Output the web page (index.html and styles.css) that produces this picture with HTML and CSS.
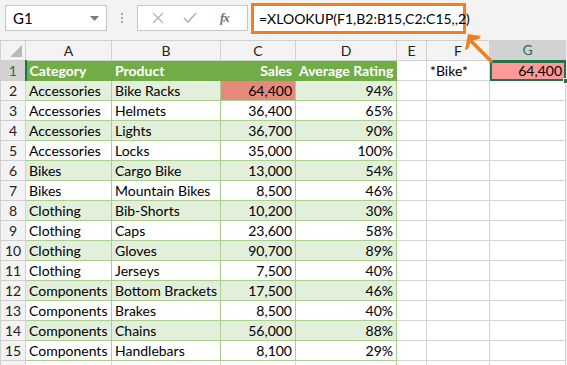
FILE: index.html
```html
<!DOCTYPE html>
<html lang="en">
<head>
  <meta charset="UTF-8" />
  <title>XLOOKUP wildcard</title>
  <link rel="stylesheet" href="styles.css">
</head>
<body>
  <div class="sheet">
    <!-- Name box + formula bar -->
    <div class="toolbar">
      <div class="namebox">
        <span>G1</span>
        <svg class="drop" width="9" height="5" viewBox="0 0 9 5"><path d="M0 0h9L4.5 5z" fill="#7a7a7a"/></svg>
      </div>
      <div class="grip"><i></i><i></i><i></i></div>
      <div class="fxbox">
        <svg width="12" height="12" viewBox="0 0 12 12"><path d="M1 1l10 10M11 1L1 11" stroke="#b4b4b4" stroke-width="1.3"/></svg>
        <svg width="14" height="12" viewBox="0 0 14 12"><path d="M1 6l4 4 8-9" stroke="#b4b4b4" stroke-width="1.6" fill="none"/></svg>
        <span class="fx">fx</span>
      </div>
      <div class="formula">=XLOOKUP(F1,B2:B15,C2:C15,,2)</div>
    </div>

    <table class="grid">
      <colgroup>
        <col class="c-row"><col class="c-a"><col class="c-b"><col class="c-c"><col class="c-d"><col class="c-e"><col class="c-f"><col class="c-g">
      </colgroup>
      <thead>
        <tr>
          <th class="corner"><span class="tri"></span></th>
          <th>A</th><th>B</th><th>C</th><th>D</th><th>E</th><th>F</th><th class="active">G</th>
        </tr>
      </thead>
      <tbody>
        <tr>
          <th class="active-row">1</th>
          <td class="hd">Category</td><td class="hd">Product</td><td class="hd num">Sales</td><td class="hd">Average Rating</td>
          <td></td><td>*Bike*</td><td class="num result">64,400<span class="handle"></span></td>
        </tr>
        <tr class="band"><th>2</th><td>Accessories</td><td>Bike Racks</td><td class="num hit">64,400</td><td class="num">94%</td><td></td><td></td><td></td></tr>
        <tr><th>3</th><td>Accessories</td><td>Helmets</td><td class="num">36,400</td><td class="num">65%</td><td></td><td></td><td></td></tr>
        <tr class="band"><th>4</th><td>Accessories</td><td>Lights</td><td class="num">36,700</td><td class="num">90%</td><td></td><td></td><td></td></tr>
        <tr><th>5</th><td>Accessories</td><td>Locks</td><td class="num">35,000</td><td class="num">100%</td><td></td><td></td><td></td></tr>
        <tr class="band"><th>6</th><td>Bikes</td><td>Cargo Bike</td><td class="num">13,000</td><td class="num">54%</td><td></td><td></td><td></td></tr>
        <tr><th>7</th><td>Bikes</td><td>Mountain Bikes</td><td class="num">8,500</td><td class="num">46%</td><td></td><td></td><td></td></tr>
        <tr class="band"><th>8</th><td>Clothing</td><td>Bib-Shorts</td><td class="num">10,200</td><td class="num">30%</td><td></td><td></td><td></td></tr>
        <tr><th>9</th><td>Clothing</td><td>Caps</td><td class="num">23,600</td><td class="num">58%</td><td></td><td></td><td></td></tr>
        <tr class="band"><th>10</th><td>Clothing</td><td>Gloves</td><td class="num">90,700</td><td class="num">89%</td><td></td><td></td><td></td></tr>
        <tr><th>11</th><td>Clothing</td><td>Jerseys</td><td class="num">7,500</td><td class="num">40%</td><td></td><td></td><td></td></tr>
        <tr class="band"><th>12</th><td>Components</td><td>Bottom Brackets</td><td class="num">17,500</td><td class="num">46%</td><td></td><td></td><td></td></tr>
        <tr><th>13</th><td>Components</td><td>Brakes</td><td class="num">8,500</td><td class="num">40%</td><td></td><td></td><td></td></tr>
        <tr class="band"><th>14</th><td>Components</td><td>Chains</td><td class="num">56,000</td><td class="num">88%</td><td></td><td></td><td></td></tr>
        <tr><th>15</th><td>Components</td><td>Handlebars</td><td class="num">8,100</td><td class="num">29%</td><td></td><td></td><td></td></tr>
        <tr class="cut"><th></th><td></td><td></td><td></td><td></td><td></td><td></td><td></td></tr>
      </tbody>
    </table>

    <!-- callout from G1 to the formula -->
    <svg class="callout" width="40" height="40" viewBox="0 0 40 40">
      <path d="M33 33L14 14" stroke="#f07f1f" stroke-width="3.5" stroke-linecap="round"/>
      <path d="M10 6l13 2-2 3-8 2-3 8-3 1z" fill="#f07f1f"/>
    </svg>
  </div>
</body>
</html>
```

FILE: styles.css
```css
:root {
  --chrome: #f3f3f3;
  --gridline: #d4d4d4;
  --green: #70ad47;
  --band: #e2efda;
  --band-line: #a9d08e;
  --excel: #217346;
  --orange: #f07f1f;
}

* { box-sizing: border-box; }

body {
  margin: 0;
  background: #fff;
  font-family: Lato, "Open Sans", sans-serif;
  color: #000;
}

.sheet {
  position: relative;
  width: 567px;
  height: 365px;
  overflow: hidden;
  background: var(--chrome);
}

/* ---- formula bar ---- */
.toolbar {
  display: flex;
  align-items: center;
  height: 40px;
  padding: 0 0 4px 5px;
}

.namebox {
  width: 102px;
  height: 26px;
  background: #fff;
  border: 1px solid #c6c6c6;
  display: flex;
  align-items: center;
  justify-content: space-between;
  padding: 0 7px 0 7px;
  font-size: 15px;
}

.namebox .drop { margin-top: 1px; }

.grip {
  width: 30px;
  display: flex;
  flex-direction: column;
  align-items: center;
  gap: 2px;
}

.grip i {
  width: 2px;
  height: 2px;
  background: #a6a6a6;
}

.fxbox {
  width: 111px;
  height: 26px;
  background: #fff;
  border: 1px solid #c6c6c6;
  display: flex;
  align-items: center;
  gap: 0;
  padding: 0 10px 0 14px;
}

.fxbox svg:first-child { margin-right: 19px; }
.fxbox svg:nth-child(2) { margin-right: 23px; }

.fx {
  font-family: "Liberation Serif", serif;
  font-style: italic;
  font-weight: bold;
  font-size: 13px;
  color: #6f6f6f;
  letter-spacing: -1px;
}

.formula {
  margin-left: 3px;
  width: 215px;
  height: 31px;
  margin-top: 1px;
  background: #fff;
  border: 3px solid var(--orange);
  font-size: 14px;
  padding: 4px 0 0 5px;
  white-space: nowrap;
}

/* ---- worksheet ---- */
.grid {
  border-collapse: collapse;
  table-layout: fixed;
  width: 565px;
  background: #fff;
  font-size: 14px;
}

.c-row { width: 25px; }
.c-a { width: 86px; }
.c-b { width: 109px; }
.c-c { width: 75px; }
.c-d { width: 101px; }
.c-e { width: 30px; }
.c-f { width: 63px; }
.c-g { width: 76px; }

.grid th, .grid td {
  height: 20px;
  padding: 0 3px;
  border: 1px solid var(--gridline);
  white-space: nowrap;
  overflow: hidden;
  line-height: 18px;
}

.grid th {
  background: var(--chrome);
  font-weight: normal;
  color: #222;
  border-color: #d0d0d0;
}

.grid thead th { text-align: center; }
.grid tbody th { text-align: center; padding: 0; }

.corner { position: relative; }

.tri {
  position: absolute;
  right: 3px;
  bottom: 3px;
  width: 0;
  height: 0;
  border-left: 12px solid transparent;
  border-bottom: 12px solid #b8b8b8;
}

.grid thead th.active {
  background: #d2d2d2;
  color: var(--excel);
  border-bottom: 2px solid var(--excel);
}

.grid tbody th.active-row {
  background: #d2d2d2;
  color: var(--excel);
  border-right: 2px solid var(--excel);
}

.num { text-align: right; }

.grid td.hd {
  background: var(--green);
  color: #fff;
  font-weight: bold;
  border-color: var(--green);
}

.band td:nth-of-type(-n+4) {
  background: var(--band);
}

.grid tbody tr:not(.cut) td:nth-of-type(-n+4) {
  border-color: var(--band-line);
  border-left-color: var(--gridline);
}

.grid tbody tr td:nth-of-type(1) { border-left-color: var(--band-line); }
.grid tbody tr td:nth-of-type(4) { border-right-color: var(--band-line); }

.grid tbody tr:first-child td.hd { border-color: var(--green); }

.grid td.hit { background: #e6897b; }

.grid td.result {
  position: relative;
  background: #fc9a9a;
  outline: 2px solid var(--excel);
  outline-offset: -2px;
  overflow: visible;
}

.handle {
  position: absolute;
  right: -4px;
  bottom: -4px;
  width: 6px;
  height: 6px;
  background: var(--excel);
  border: 1px solid #fff;
}

.cut th, .cut td { height: 6px; }

.callout {
  position: absolute;
  left: 458px;
  top: 28px;
}
```
